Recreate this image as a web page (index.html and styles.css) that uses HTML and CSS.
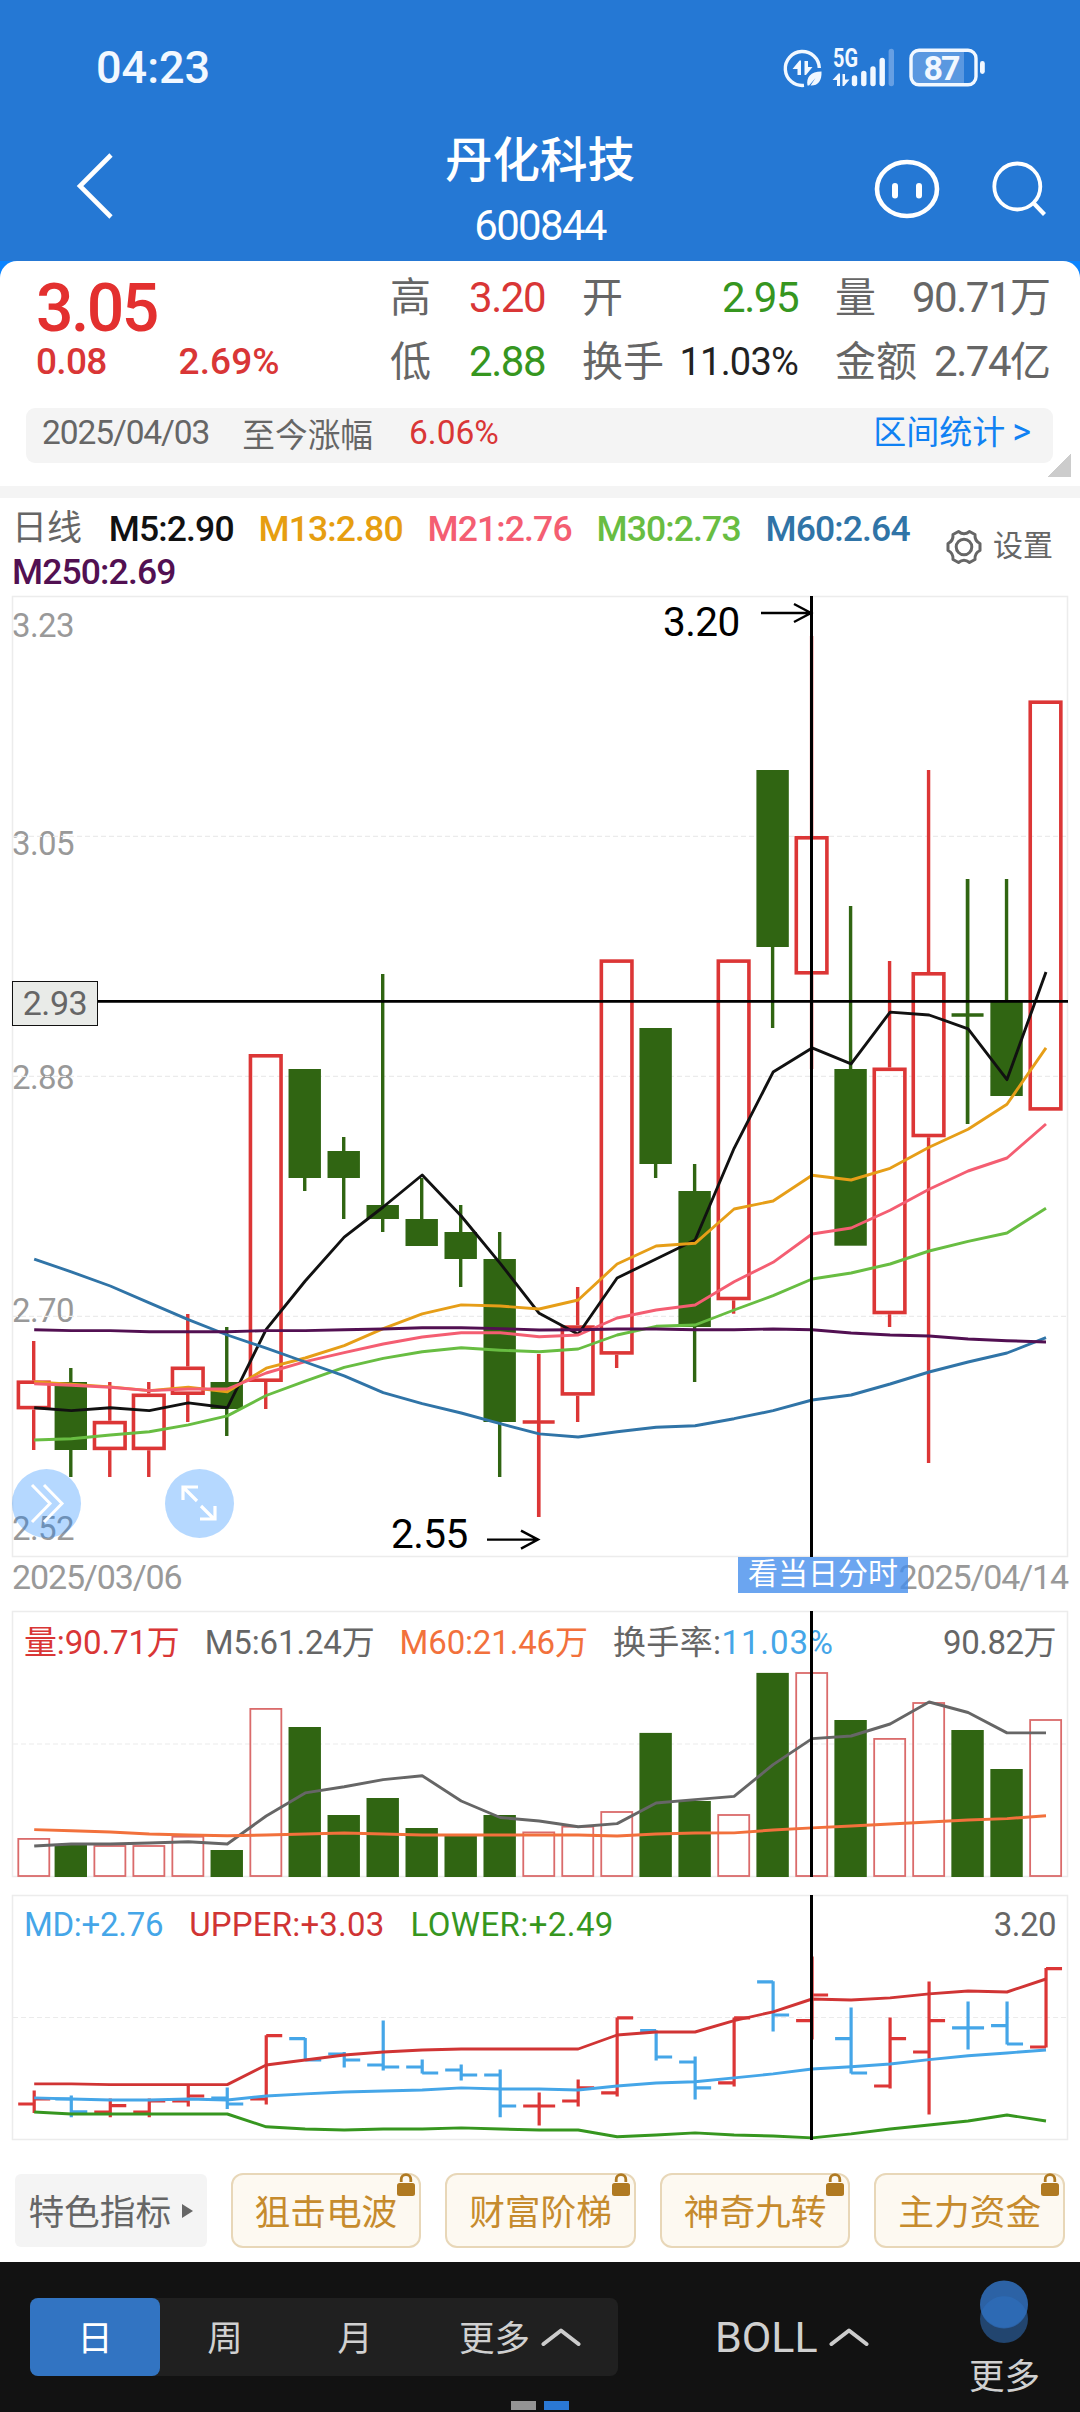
FILE: index.html
```html
<!DOCTYPE html>
<html lang="zh-CN">
<head>
<meta charset="utf-8">
<title>丹化科技 600844</title>
<link rel="stylesheet" href="styles.css">
</head>
<body>
<div class="app">
  <header class="header">
    <div class="status">
      <span class="clock">04:23</span>
      <svg class="status-icons" viewBox="780 40 210 56" width="210" height="56">
        <path d="M804 85.4A17 17 0 1 1 819.3 68" fill="none" stroke="#f2f8ff" stroke-width="3.4"/>
        <path d="M792.5 69l7-8.5h1.5V75h-3.5v-6zM804.500 61h3.500v6h4.500l-6.500 8h-1.500z" fill="#f2f8ff"/>
        <path d="M807.500 85.500c-1.500-8 3-14 14-14 .5 10-4 14.500-11 14l5-7.500-6.500 7.500z" fill="#f2f8ff"/>
        <path d="M832.500 80l6-6.500h1.500V86h-3v-6zM842.500 74h2.500v5.500h4.500l-5.500 6.500h-1.500z" fill="#f2f8ff"/>
        <text x="833" y="67" class="net" textLength="25" lengthAdjust="spacingAndGlyphs">5G</text>
        <path d="M854.500 78v5.500M863.800 73.500v10M873 69v14.500M882.200 60.500v23" stroke="#f2f8ff" stroke-width="5.400" stroke-linecap="round"/>
        <path d="M891.300 51.500v32" stroke="#669fe3" stroke-width="5.400" stroke-linecap="round"/>
        <path d="M914 50h50v35h-50q-3-1-3-5V55q0-4 3-5z" fill="#5a98e0"/>
        <rect x="911" y="50.300" width="65" height="34.500" rx="8" fill="none" stroke="#f2f8ff" stroke-width="3.400"/>
        <rect x="980" y="61" width="4.800" height="13" rx="2.400" fill="#f2f8ff"/>
        <text x="923.500" y="80" class="bat" textLength="37">87</text>
      </svg>
    </div>
    <nav class="nav">
      <svg class="back" viewBox="0 0 44 70" width="44" height="70"><path d="M41 4L10 35l31 31" fill="none" stroke="#fff" stroke-width="4.600"/></svg>
      <div class="titles"><h1>丹化科技</h1><p>600844</p></div>
      <div class="nav-icons">
        <svg viewBox="0 0 66 62" width="66" height="62"><ellipse cx="33" cy="31" rx="30" ry="27" fill="none" stroke="#fff" stroke-width="4.600"/><path d="M21 28v9.500M45 28v9.500" stroke="#fff" stroke-width="6" stroke-linecap="round"/></svg>
        <svg viewBox="0 0 58 58" width="58" height="58"><circle cx="27.300" cy="26.500" r="23" fill="none" stroke="#fff" stroke-width="3.800"/><path d="M43.500 43l11 11.500" stroke="#fff" stroke-width="4.200"/></svg>
      </div>
    </nav>
  </header>

  <section class="quote">
    <div class="quote-main">
      <div class="price">
        <div class="last">3.05</div>
        <div class="change"><span>0.08</span><span class="pct">2.69%</span></div>
      </div>
      <dl class="stats">
        <div class="s1"><dt>高</dt><dd class="up">3.20</dd></div>
        <div class="s2"><dt>开</dt><dd class="down">2.95</dd></div>
        <div class="s3"><dt>量</dt><dd>90.71<i>万</i></dd></div>
        <div class="s1"><dt>低</dt><dd class="down">2.88</dd></div>
        <div class="s2"><dt>换手</dt><dd class="dark">11.03%</dd></div>
        <div class="s3"><dt>金额</dt><dd>2.74<i>亿</i></dd></div>
      </dl>
    </div>
    <div class="since">
      <span class="date">2025/04/03</span><span class="since-label">至今涨幅</span><span class="up since-pct">6.06%</span>
      <a class="range">区间统计<b>&gt;</b></a>
    </div>
    <div class="corner"></div>
  </section>

  <section class="ma">
    <div class="ma-list">
      <span class="period">日线</span>
      <span class="m5">M5:2.90</span><span class="m13">M13:2.80</span><span class="m21">M21:2.76</span><span class="m30">M30:2.73</span><span class="m60">M60:2.64</span>
      <span class="m250">M250:2.69</span>
    </div>
    <div class="settings">
      <svg viewBox="-18 -18 36 36" width="36" height="36" fill="none" stroke="#666" stroke-width="3"><path d="M-5.500-15.500Q0-11 5.500-15.500L11-12.500Q10.500-6 16-3.500V3.500Q10.500 6 11 12.500L5.500 15.500Q0 11-5.500 15.500L-11 12.500Q-10.500 6-16 3.500V-3.500Q-10.500-6-11-12.500Z" stroke-linejoin="round"/><circle r="7.800"/></svg>
      <span>设置</span>
    </div>
  </section>

  <section class="kline">
    <span class="axis a1">3.23</span><span class="axis a2">3.05</span><span class="axis a3">2.88</span><span class="axis a4">2.70</span><span class="axis a5">2.52</span>
    <span class="mark high">3.20</span><span class="mark low">2.55</span>
    <svg id="kline" class="plot" viewBox="12 596 1056 962" width="1056" height="962"></svg>
    <span class="cursor-price">2.93</span>
    <button class="fab next"><svg viewBox="0 0 69 69" width="69" height="69"><path d="M20 16l18 18.500L20 53M32 16l18 18.500L32 53" fill="none" stroke="#fff" stroke-width="3"/></svg></button>
    <button class="fab full"><svg viewBox="0 0 69 69" width="69" height="69"><path d="M32 32L19 19M18 31V18h15M36 37l13 13M50 37v13H35" fill="none" stroke="#fff" stroke-width="3.200"/></svg></button>
  </section>
  <div class="dates"><span>2025/03/06</span><span class="end">2025/04/14</span><a class="day">看当日分时</a></div>

  <section class="panel volume">
    <div class="legend"><span class="up">量:90.71万</span><span class="v5">M5:61.24万</span><span class="v60">M60:21.46万</span><span class="turn">换手率:<em>11.03%</em></span><span class="max">90.82万</span></div>
    <svg id="volume" class="plot" viewBox="12 1611 1056 267" width="1056" height="267"></svg>
  </section>
  <section class="panel boll">
    <div class="legend"><span class="md">MD:+2.76</span><span class="upper">UPPER:+3.03</span><span class="lower">LOWER:+2.49</span><span class="max">3.20</span></div>
    <svg id="boll" class="plot" viewBox="12 1895 1056 246" width="1056" height="246"></svg>
  </section>

  <div class="features">
    <button class="feature-menu">特色指标<svg viewBox="0 0 11 14" width="11" height="14"><path d="M0 0l11 7-11 7z" fill="#666"/></svg></button>
    <button class="feature">狙击电波<svg class="lock" viewBox="0 0 18 23" width="18" height="23"><path d="M4.200 9V6.500a4.800 4.800 0 0 1 9.600 0V9" fill="none" stroke="#b07a22" stroke-width="2.800"/><rect y="10" width="18" height="13" rx="2.500" fill="#b07a22"/></svg></button>
    <button class="feature">财富阶梯<svg class="lock" viewBox="0 0 18 23" width="18" height="23"><path d="M4.200 9V6.500a4.800 4.800 0 0 1 9.600 0V9" fill="none" stroke="#b07a22" stroke-width="2.800"/><rect y="10" width="18" height="13" rx="2.500" fill="#b07a22"/></svg></button>
    <button class="feature">神奇九转<svg class="lock" viewBox="0 0 18 23" width="18" height="23"><path d="M4.200 9V6.500a4.800 4.800 0 0 1 9.600 0V9" fill="none" stroke="#b07a22" stroke-width="2.800"/><rect y="10" width="18" height="13" rx="2.500" fill="#b07a22"/></svg></button>
    <button class="feature">主力资金<svg class="lock" viewBox="0 0 18 23" width="18" height="23"><path d="M4.200 9V6.500a4.800 4.800 0 0 1 9.600 0V9" fill="none" stroke="#b07a22" stroke-width="2.800"/><rect y="10" width="18" height="13" rx="2.500" fill="#b07a22"/></svg></button>
  </div>

  <footer class="footer">
    <div class="tabs">
      <button class="tab on">日</button><button class="tab">周</button><button class="tab">月</button>
      <button class="tab more">更多<svg viewBox="0 0 40 20" width="40" height="20"><path d="M2.500 17L20 3.500 37.500 17" fill="none" stroke="#ccc" stroke-width="4" stroke-linecap="round" stroke-linejoin="round"/></svg></button>
    </div>
    <button class="boll-btn">BOLL<svg viewBox="0 0 40 20" width="40" height="20"><path d="M2.500 17L20 3.500 37.500 17" fill="none" stroke="#ccc" stroke-width="4" stroke-linecap="round" stroke-linejoin="round"/></svg></button>
    <div class="more-col">
      <svg viewBox="0 0 48 64" width="48" height="64"><circle cx="24" cy="39" r="24" fill="#22456f"/><circle cx="24" cy="24.500" r="24" fill="#2c62a5"/><path d="M1.500 32a24 24 0 0 1 45 0 24 24 0 0 1-45 0z" fill="#2d6ab4"/></svg>
      <span>更多</span>
    </div>
    <div class="pages"><i></i><i class="current"></i></div>
  </footer>
</div>
<script src="chart.js"></script>
</body>
</html>
```

FILE: styles.css
```css
* { box-sizing: border-box; }
body, h1, p, dl, dd { margin: 0; }
body { background: #fff; color: #666; font-family: Roboto, "Noto Sans CJK SC", sans-serif; }
button { border: 0; padding: 0; background: none; font: inherit; color: inherit; }
i, em { font-style: normal; }
span, a, dt, dd, button { white-space: nowrap; }
.app { width: 1080px; height: 2412px; overflow: hidden; display: flex; flex-direction: column; }

.header { height: 261px; flex: none; background: #2578d4; color: #fff; padding-top: 40px; }
.status { height: 56px; display: flex; justify-content: space-between; align-items: center; padding: 0 90px 0 96px; color: #f2f8ff; }
.clock { font-size: 45px; font-weight: 500; line-height: 56px; }
.net { font: 700 25px Roboto, sans-serif; fill: #f2f8ff; }
.bat { font: 700 34px Roboto, sans-serif; fill: #f2f8ff; }
.nav { display: grid; grid-template-columns: 332px 240px 1fr; height: 165px; padding: 0 32px 0 70px; align-items: start; }
.back { margin-top: 55px; }
.titles { text-align: center; padding-top: 34px; margin-left: 18px; margin-right: -18px; }
.titles h1 { font-size: 47.500px; font-weight: 500; line-height: 62px; }
.titles p { font-size: 42px; line-height: 46px; margin-top: 11px; letter-spacing: -1.700px; }
.nav-icons { display: flex; justify-content: flex-end; gap: 50px; padding-top: 64px; }
.nav-icons svg { flex: none; }
.nav-icons svg:first-child { margin-top: -2px; }

.quote { position: relative; flex: none; height: 225px; background: #fff; border-radius: 17px 17px 0 0; padding: 9px 27px 0 26px; }
.quote::before { content: ""; position: absolute; z-index: -1; inset: 0 0 auto; height: 20px; background: #0a84ff; }
.quote-main { display: flex; justify-content: space-between; height: 138px; }
.price { padding-left: 10px; color: #e3302f; }
.last { font-size: 66px; font-weight: 500; line-height: 77px; letter-spacing: -2.500px; height: 70px; }
.change { display: flex; font-size: 37px; font-weight: 500; line-height: 44px; letter-spacing: -.7px; color: #d93636; }
.pct { margin-left: 72px; letter-spacing: .1px; }
.stats { display: grid; grid-template-columns: 155px 216px 216px; column-gap: 37px; grid-auto-rows: 64px; font-size: 42px; width: 663px; margin-top: -4px; }
.stats div { display: flex; justify-content: space-between; align-items: center; line-height: 64px; }
.stats dt { font-size: 41px; }
.stats dd { letter-spacing: -1.500px; }
.stats i { font-size: 41px; letter-spacing: 0; }
.stats dd.dark { font-size: 38px; letter-spacing: -.8px; color: #222; }
.up { color: #d93636; }
.down { color: #36961f; }
.since { display: flex; align-items: center; height: 55px; border-radius: 9px; background: #f4f4f4; padding: 0 22px 7px 16px; font-size: 33.500px; }
.date { letter-spacing: -1.100px; }
.since-label { font-size: 32.700px; margin-left: 33px; }
.since-pct { margin-left: 36px; }
.range { margin-left: auto; color: #1081f3; font-size: 33px; line-height: 40px; }
.range b { font-weight: 400; font-size: 36px; line-height: 40px; margin-left: 7px; }
.corner { position: absolute; right: 9px; bottom: 9px; width: 24px; height: 24px; background: linear-gradient(135deg, transparent 50%, #ccc 50%); }

.ma { flex: none; height: 110px; border-top: 12px solid #f4f4f4; display: flex; justify-content: space-between; padding: 10px 27px 0 12px; }
.ma-list { display: flex; flex-wrap: wrap; column-gap: 24.800px; width: 920px; font-size: 35.500px; line-height: 42.500px; font-weight: 500; letter-spacing: -.87px; height: 85px; }
.period { font-size: 35px; font-weight: 400; letter-spacing: 0; margin-right: 2px; }
.m5 { color: #111; } .m13 { color: #e69e10; } .m21 { color: #f45e72; } .m30 { color: #68bd42; } .m60 { color: #3074a7; } .m250 { color: #521052; }
.settings { display: flex; align-items: center; gap: 11px; height: 78px; font-size: 30px; line-height: 40px; }
.settings span { margin-top: -3px; }

.kline { position: relative; flex: none; height: 962px; margin: 0 12px; }
.plot { position: absolute; left: 0; top: 0; display: block; overflow: visible; }
.axis { position: absolute; left: 0; font-size: 33px; line-height: 40px; letter-spacing: -.6px; color: #999; }
.a1 { top: 10px; } .a2 { top: 228px; } .a3 { top: 462px; } .a4 { top: 695px; } .a5 { top: 913px; }
.mark { position: absolute; font-size: 40.500px; line-height: 48px; letter-spacing: -.6px; color: #000; }
.high { left: 651px; top: 2px; }
.low { left: 379px; top: 914px; }
.cursor-price { position: absolute; left: 0; top: 385px; width: 86px; height: 45px; border: 1.500px solid #111; background: #e9ebe8; text-align: center; font-size: 34px; letter-spacing: -.4px; line-height: 42px; }
.fab { position: absolute; top: 873px; width: 69px; height: 69px; border-radius: 50%; background: rgba(10, 125, 255, .3); }
.fab svg { display: block; }
.next { left: 0; } .full { left: 153px; }
.dates { position: relative; flex: none; display: flex; justify-content: space-between; height: 53px; margin: 0 12px; font-size: 34px; line-height: 38px; letter-spacing: -1.150px; color: #999; }
.day { position: absolute; left: 726px; top: -1px; width: 170px; height: 36px; background: rgba(70, 143, 236, .8); color: #fff; font-size: 30px; line-height: 34px; letter-spacing: 0; text-align: center; }

.panel { position: relative; flex: none; margin: 0 12px; }
.volume { height: 284px; }
.boll { height: 246px; }
.legend { display: flex; height: 58px; padding: 0 12px; align-items: center; font-size: 33px; letter-spacing: -.15px; }
.legend .max { margin-left: auto; letter-spacing: -.5px; }
.v5, .v60, .turn { margin-left: 25px; }
.v60 { color: #f2713c; }
em { color: #45a6e8; }
.turn { letter-spacing: .4px; }
.turn em { letter-spacing: .9px; }
.md { color: #45a6e8; letter-spacing: -.3px; }
.upper { color: #d03434; margin-left: 26px; letter-spacing: .2px; }
.lower { color: #36961f; margin-left: 26px; letter-spacing: .4px; }

.features { display: flex; flex: none; gap: 24px; height: 121px; padding: 32px 15px 0; }
.feature-menu { display: flex; align-items: center; justify-content: center; gap: 11px; width: 192px; height: 73px; margin-top: 1px; padding-bottom: 2px; border-radius: 6px; background: #f4f4f4; font-size: 35.700px; }
.feature-menu svg { margin-top: 2px; }
.feature { position: relative; width: 191px; height: 75px; padding-bottom: 2px; border: 2px solid #e8d7b8; border-radius: 12px; background: #fdf9f1; color: #c68b2d; font-size: 35.700px; }
.lock { position: absolute; top: -2px; right: 4px; }

.footer { position: relative; flex: none; height: 150px; background: #121212; color: #d0d0d0; display: flex; padding-left: 30px; font-size: 35.500px; }
.tabs { display: flex; width: 588px; height: 78px; margin-top: 36px; background: #202020; border-radius: 8px; }
.tab { width: 130px; height: 78px; padding-bottom: 3px; border-radius: 8px; }
.tab.on { background: #3274c2; color: #fff; }
.tab.more { width: 198px; display: flex; align-items: center; justify-content: center; gap: 11px; padding-left: 2px; }
.tab.more svg { margin-top: 2px; }
.boll-btn { display: flex; align-items: center; gap: 11px; height: 78px; margin: 36px 0 0 97px; font-size: 43px; }
.more-col { display: flex; flex-direction: column; align-items: center; margin-left: auto; margin-right: 40px; padding-top: 18px; }
.more-col span { line-height: 40px; margin-top: 13px; }
.pages { position: absolute; left: 511px; bottom: 2px; display: flex; gap: 8px; }
.pages i { width: 25px; height: 9px; background: #949494; }
.pages .current { background: #2a78d4; }
```

FILE: chart.js
```js
const RED = '#dc3636', GREEN = '#306512', BLUE = '#45a6e8';
const xs = Array.from({ length: 27 }, (_, i) => i ? 31.8 + i * 38.99 : 33.7);

// side, wick top, body top, body bottom, wick bottom
const candles = [
  ['r', 1341, 1380.4, 1409.4, 1450], ['g', 1368, 1382, 1450, 1477], ['r', 1382, 1420.8, 1450.2, 1477],
  ['r', 1382, 1393.5, 1450.2, 1477], ['r', 1314, 1366.5, 1395, 1422], ['g', 1327, 1382, 1409, 1436],
  ['r', 1054, 1054, 1382, 1409], ['g', 1069, 1069, 1178, 1191], ['g', 1137, 1151, 1178, 1219],
  ['g', 974, 1205, 1219, 1232], ['g', 1178, 1219, 1246, 1246], ['g', 1205, 1232, 1259, 1287],
  ['g', 1232, 1259, 1422, 1477], ['r', 1354, 1420, 1424, 1517], ['r', 1287, 1325.3, 1395.7, 1422],
  ['r', 959.3, 959.3, 1354.7, 1368], ['g', 1028, 1028, 1164, 1178], ['g', 1164, 1191, 1327, 1382],
  ['r', 959.3, 959.3, 1300.3, 1313.7], ['g', 770, 770, 947, 1028], ['r', 636, 836, 974.6, 1069],
  ['g', 906, 1069, 1245.7, 1245.7], ['r', 961, 1067.5, 1314.3, 1327], ['r', 770, 972, 1137.3, 1463],
  ['g', 879, 1013.5, 1016.5, 1124], ['g', 879, 1001.5, 1096, 1096], ['r', 700.4, 700.4, 1110.7, 1110.7]
];
const averages = {
  '#111': [1407.8, 1410.6, 1407.8, 1410.6, 1402.9, 1407.8, 1329.4, 1281, 1237.1, 1207, 1175, 1216, 1263.3, 1313.3, 1334.3, 1278, 1259, 1240, 1148.3, 1072.1, 1047.9, 1063.9, 1012.1, 1015, 1028.9, 1079.6, 972],
  '#e69e18': [1382, 1384.1, 1386.9, 1390.6, 1387.3, 1391.8, 1368.2, 1358, 1345.7, 1328.6, 1313.9, 1304.9, 1306, 1309, 1300, 1264, 1246, 1243.3, 1209, 1201, 1175.3, 1180, 1168.3, 1147.3, 1129.3, 1104.3, 1047.9],
  '#f45e72': [1383.7, 1385.3, 1387.3, 1390.6, 1389, 1389, 1373, 1361.6, 1352.7, 1344, 1337, 1332.7, 1332.7, 1336.7, 1335, 1318, 1310, 1305, 1281.7, 1262.3, 1234, 1228, 1210.3, 1189.3, 1171, 1158, 1124],
  '#68bd42': [1440, 1438.8, 1435, 1431.8, 1424.9, 1415.9, 1395.5, 1381.2, 1367.3, 1358.4, 1351.8, 1347.8, 1350.2, 1351.8, 1349, 1335, 1326.3, 1325, 1310, 1295.7, 1279, 1273, 1264, 1251, 1241.3, 1233, 1208.3],
  '#3074a7': [1259.2, 1271.8, 1286, 1302.9, 1319.6, 1335, 1348.2, 1362, 1375.9, 1392.7, 1403.7, 1413, 1423.7, 1433.9, 1437, 1431.7, 1427.3, 1425.7, 1418.7, 1410.7, 1400, 1395, 1384, 1372, 1362, 1353, 1337.7],
  '#521052': [1329.8, 1330.6, 1330.6, 1331.8, 1331.8, 1331.8, 1330.6, 1330.6, 1329.8, 1329, 1327.8, 1327.8, 1328.6, 1330, 1329.7, 1329, 1329, 1329.7, 1329.7, 1329, 1329.7, 1333, 1335, 1336, 1339, 1340.7, 1342]
};
const volumeTops = [1837.9, 1844, 1845, 1845, 1835.7, 1850, 1707.9, 1727, 1815, 1798, 1828, 1835.7, 1815, 1831.4, 1825.7, 1811, 1732.9, 1801, 1814, 1672.9, 1672, 1720, 1737.9, 1702, 1730, 1769, 1719];
const volumeAverages = {
  '#666': [1846, 1844, 1844, 1843, 1841.8, 1844, 1816, 1792.9, 1786.8, 1779.6, 1775.7, 1801, 1817.5, 1821, 1826.8, 1823.6, 1803, 1799.6, 1796.4, 1764.6, 1738.6, 1736, 1724, 1702, 1712.5, 1732.9, 1732.9],
  '#f2713c': [1829.6, 1830.7, 1832, 1834, 1835, 1835.7, 1835, 1834, 1833, 1834, 1835, 1835, 1835, 1835, 1835, 1836, 1834, 1833, 1832.9, 1830, 1827.9, 1826, 1824, 1822, 1820, 1818.6, 1815.7]
};
// high, low, open, close
const bars = [
  [2091, 2112.5, 2104, 2099], [2096, 2116.8, 2099, 2111.8], [2099, 2116.8, 2112, 2105.7], [2099, 2116.8, 2112, 2101],
  [2085.7, 2106, 2101, 2096], [2087.9, 2108.6, 2098, 2104], [2035.7, 2104, 2099, 2035.7], [2038.6, 2060, 2038.6, 2060],
  [2052.5, 2067, 2054, 2060], [2021, 2070, 2065, 2067], [2060, 2073, 2067, 2073], [2065, 2080, 2070, 2075],
  [2070, 2116.8, 2075, 2106], [2092.9, 2125, 2106, 2106], [2080, 2106, 2101, 2087.9], [2017.9, 2096, 2092.9, 2017.9],
  [2030.7, 2060, 2030.7, 2057], [2057, 2099, 2062, 2087.9], [2017.9, 2086, 2082.9, 2017.9], [1981.8, 2031, 1981.8, 2015],
  [1957, 2039, 2020.7, 1995], [2007.9, 2073, 2038.6, 2073], [2017.9, 2087.9, 2086, 2038.6], [1982, 2114, 2052, 2020.7],
  [2002, 2049, 2027.9, 2027.9], [2002, 2044, 2025.7, 2044], [1968.6, 2047, 2047, 1968.6]
];
const bands = {
  '#d03434': [2083.9, 2083.9, 2084.6, 2084.6, 2084.6, 2084.6, 2065, 2060, 2055, 2052, 2050, 2049, 2049, 2049, 2049, 2035, 2032, 2032, 2020.7, 2011.8, 1999, 2000, 1997.9, 1993.9, 1991, 1992, 1979],
  '#45a6e8': [2097.9, 2099, 2100, 2100, 2099, 2100, 2096, 2093.9, 2092, 2091, 2090, 2087.9, 2089, 2089, 2090, 2086, 2083, 2081.8, 2077.9, 2073.9, 2069, 2066.8, 2064, 2059.6, 2055.7, 2053, 2050],
  '#36961f': [2112, 2114, 2114, 2114, 2114, 2114, 2126.8, 2129, 2130, 2129, 2129, 2127.9, 2129, 2130, 2130, 2136.8, 2135, 2132.9, 2135, 2136, 2137.9, 2133.9, 2129, 2125, 2121, 2115, 2121]
};

const path = (d, color, width, extra = '') => `<path d="${d}" stroke="${color}" stroke-width="${width}" fill="none" ${extra}/>`;
const frame = (top, bottom, rows) => path(`M12.5 ${top}H1067.5V${bottom}H12.5Z`, '#ececec', 1.5) +
  rows.map(y => path(`M13 ${y}H1067`, '#ebebeb', 1.2, 'stroke-dasharray="5 3"')).join('');
const series = set => Object.entries(set).map(([c, ys]) =>
  path('M' + ys.map((y, i) => `${(xs[i] + .5).toFixed(1)} ${y}`).join('L'), c, 2.9, 'stroke-linejoin="round"')).join('');
const solid = (x, top, bottom) => `<rect x="${x - 16.2}" y="${top}" width="32.4" height="${bottom - top}" fill="${GREEN}"/>`;

let k = frame(596.5, 1556.5, [836.4, 1076.4, 1316.3]);
candles.forEach(([side, hi, top, bottom, lo], i) => {
  const x = xs[i], color = side === 'r' ? RED : GREEN;
  k += path(`M${x} ${hi}V${top}M${x} ${bottom}V${lo}`, color, 3.4);
  if (bottom - top < 5) k += path(`M${x} ${hi}V${lo}M${x - 16} ${(top + bottom) / 2}h32`, color, 3.4);
  else if (side === 'g') k += solid(x, top, bottom);
  else k += `<rect x="${x - 15.3}" y="${top + 1.8}" width="30.6" height="${bottom - top - 3.6}" fill="none" stroke="${RED}" stroke-width="3.6"/>`;
});
k += series(averages) + path('M98 1001.4H1068', '#000', 2.8) + path('M811.5 596V1557', '#000', 3);
k += path('M761 613H811M794 604L811 613L794 622M487 1539.6H538M521 1530.6L538 1539.6L521 1548.6', '#000', 2.4);
document.getElementById('kline').innerHTML = k;

let v = frame(1611.5, 1876.5, [1744]);
volumeTops.forEach((top, i) => {
  v += candles[i][0] === 'g' ? solid(xs[i], top, 1877)
    : `<rect x="${xs[i] - 15.4}" y="${top + 1}" width="31" height="${1875 - top}" fill="none" stroke="#da6b6b" stroke-width="1.8"/>`;
});
v += series(volumeAverages) + path('M811.5 1611V1877', '#000', 3);
document.getElementById('volume').innerHTML = v;

let b = frame(1895.5, 2139.5, [2017.5]);
bars.forEach(([hi, lo, open, close], i) => {
  const x = xs[i] + .5;
  b += path(`M${x - 16} ${open}H${x}M${x} ${hi - .5}V${lo + .5}M${x} ${close}h16`, candles[i][0] === 'r' ? RED : BLUE, 3.2);
});
b += series(bands) + path('M811.5 1895V2140', '#000', 3);
document.getElementById('boll').innerHTML = b;
```
